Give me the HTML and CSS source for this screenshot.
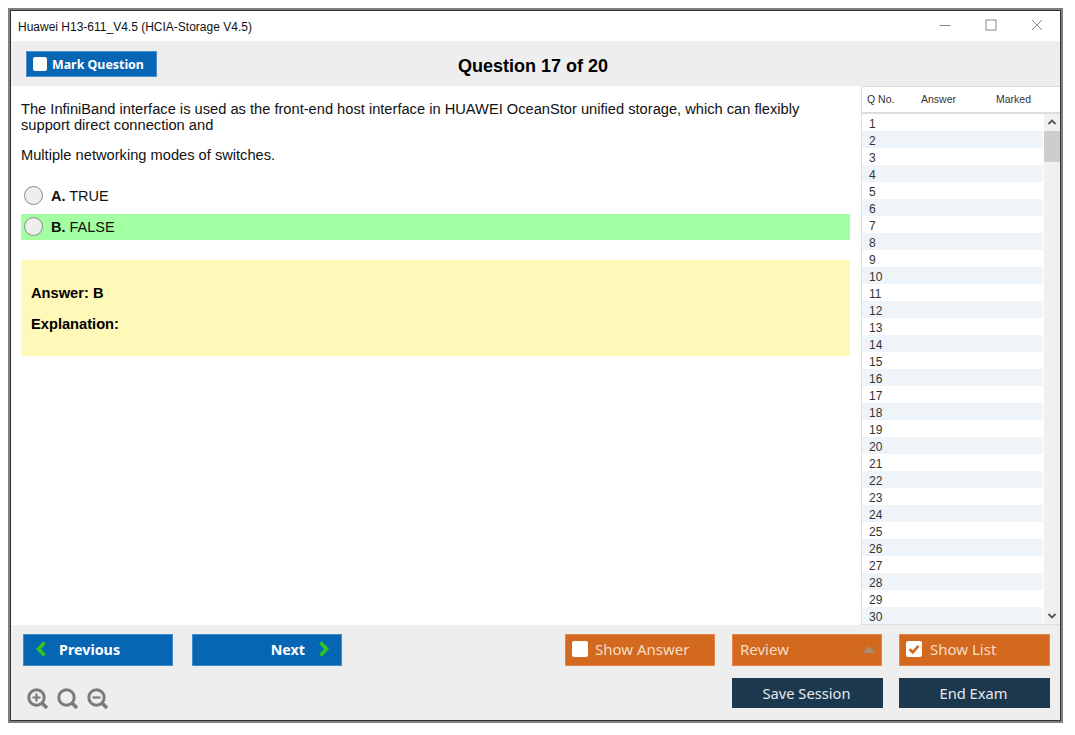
FILE: index.html
```html
<!DOCTYPE html>
<html lang="en">
<head>
<meta charset="utf-8">
<title>Huawei H13-611_V4.5</title>
<link rel="stylesheet" href="styles.css">
</head>
<body>
<div class="window">
  <header class="titlebar">
    <span class="title">Huawei H13-611_V4.5 (HCIA-Storage V4.5)</span>
    <div class="controls">
      <svg width="12" height="12" viewBox="0 0 12 12"><path d="M0.5 6.5H11.5" stroke="#8a8a8a" fill="none"/></svg>
      <svg width="12" height="12" viewBox="0 0 12 12"><rect x="1" y="1" width="10" height="10" stroke="#8a8a8a" fill="none"/></svg>
      <svg width="12" height="12" viewBox="0 0 12 12"><path d="M1 1L11 11M11 1L1 11" stroke="#8a8a8a" fill="none"/></svg>
    </div>
  </header>
  <div class="toolbar">
    <button class="btn btn-mark"><span class="box"></span>Mark Question</button>
    <h1 class="qtitle">Question 17 of 20</h1>
  </div>
  <main class="main">
    <section class="content">
      <p class="q">The InfiniBand interface is used as the front-end host interface in HUAWEI OceanStor unified storage, which can flexibly support direct connection and</p>
      <p class="q q2">Multiple networking modes of switches.</p>
      <div class="option"><span class="radio"></span><span><b>A.</b> TRUE</span></div>
      <div class="option correct"><span class="radio"></span><span><b>B.</b> FALSE</span></div>
      <div class="answer">
        <p>Answer: B</p>
        <p>Explanation:</p>
      </div>
    </section>
    <aside class="list">
      <div class="list-head"><span class="c1">Q No.</span><span class="c2">Answer</span><span class="c3">Marked</span></div>
      <div class="list-body">
        <div class="rows" id="rows">
          <div class="row">1</div><div class="row">2</div><div class="row">3</div><div class="row">4</div><div class="row">5</div>
          <div class="row">6</div><div class="row">7</div><div class="row">8</div><div class="row">9</div><div class="row">10</div>
          <div class="row">11</div><div class="row">12</div><div class="row">13</div><div class="row">14</div><div class="row">15</div>
          <div class="row">16</div><div class="row">17</div><div class="row">18</div><div class="row">19</div><div class="row">20</div>
          <div class="row">21</div><div class="row">22</div><div class="row">23</div><div class="row">24</div><div class="row">25</div>
          <div class="row">26</div><div class="row">27</div><div class="row">28</div><div class="row">29</div><div class="row">30</div>
        </div>
        <div class="scrollbar">
          <svg class="arrow" width="16" height="17" viewBox="0 0 16 17"><path d="M4.5 10L8 6.5L11.5 10" stroke="#555" stroke-width="1.8" fill="none"/></svg>
          <div class="thumb"></div>
          <div class="track"></div>
          <svg class="arrow" width="16" height="17" viewBox="0 0 16 17"><path d="M4.5 7L8 10.5L11.5 7" stroke="#555" stroke-width="1.8" fill="none"/></svg>
        </div>
      </div>
    </aside>
  </main>
  <footer class="footer">
    <div class="foot-row foot-top">
      <button class="btn btn-blue btn-prev">
        <svg width="12" height="16" viewBox="0 0 12 16"><path d="M9.5 1.5L3.5 8L9.5 14.5" stroke="#2fc61f" stroke-width="3.6" fill="none"/></svg>
        Previous
      </button>
      <button class="btn btn-blue btn-next">
        Next
        <svg width="12" height="16" viewBox="0 0 12 16"><path d="M2.5 1.5L8.5 8L2.5 14.5" stroke="#2fc61f" stroke-width="3.6" fill="none"/></svg>
      </button>
      <button class="btn btn-orange btn-answer"><span class="box box-lg"></span>Show Answer</button>
      <button class="btn btn-orange btn-review">Review<svg width="14" height="7" viewBox="0 0 14 7"><path d="M0 7L7 0L14 7Z" fill="#a98a70"/></svg></button>
      <button class="btn btn-orange btn-show"><span class="box box-lg"><svg width="14" height="14" viewBox="0 0 14 14"><path d="M2.5 7.2L5.8 10.3L11.5 3.8" stroke="#d2691e" stroke-width="2.6" fill="none"/></svg></span>Show List</button>
    </div>
    <div class="foot-row foot-bottom">
      <div class="zooms">
        <svg width="21" height="21" viewBox="0 0 21 21"><circle cx="9.5" cy="9.5" r="7.7" stroke="#7b7b7b" stroke-width="3" fill="none"/><path d="M15 15L20 20" stroke="#7b7b7b" stroke-width="3.6" fill="none"/><path d="M5.5 9.5H13.5M9.5 5.5V13.5" stroke="#7b7b7b" stroke-width="2.2" fill="none"/></svg>
        <svg width="21" height="21" viewBox="0 0 21 21"><circle cx="9.5" cy="9.5" r="7.7" stroke="#7b7b7b" stroke-width="3" fill="none"/><path d="M15 15L20 20" stroke="#7b7b7b" stroke-width="3.6" fill="none"/></svg>
        <svg width="21" height="21" viewBox="0 0 21 21"><circle cx="9.5" cy="9.5" r="7.7" stroke="#7b7b7b" stroke-width="3" fill="none"/><path d="M15 15L20 20" stroke="#7b7b7b" stroke-width="3.6" fill="none"/><path d="M5.5 9.5H13.5" stroke="#7b7b7b" stroke-width="2.2" fill="none"/></svg>
      </div>
      <button class="btn btn-navy btn-save">Save Session</button>
      <button class="btn btn-navy btn-end">End Exam</button>
    </div>
  </footer>
</div>
</body>
</html>
```
FILE: styles.css
```css
* { box-sizing: border-box; }
html, body { margin: 0; padding: 0; background: #fff; }
body { padding: 8px 0 0 8px; font-family: "Liberation Sans", Arial, sans-serif; color: #111; }
.window {
  width: 1055px; height: 715px;
  border: 2px solid #808080;
  outline: 1px solid #333;
  outline-offset: -3px;
  padding: 1px;
  display: flex; flex-direction: column;
  background: #fff;
}
.titlebar { height: 30px; flex: none; display: flex; align-items: center; justify-content: space-between; padding: 1px 17px 0 7px; }
.title { font-size: 12px; color: #111; }
.controls { display: flex; gap: 34px; margin-top: -3px; }
.toolbar { height: 45px; flex: none; background: #eee; display: flex; align-items: center; padding: 0 0 0 15px; position: relative; }
.qtitle { font-size: 18px; font-weight: bold; margin: 0; color: #000; position: absolute; left: 447px; top: 14px; line-height: 22px; }
.btn {
  font-family: "Noto Sans", "Open Sans", sans-serif;
  border: 0; padding: 0; margin: 0; color: #fff;
  display: flex; align-items: center;
  font-size: 14px;
}
.btn-mark { width: 131px; height: 26px; margin-top: 1px; background: #0766b3; border: 1px solid #4a8fc9; padding-left: 6px; font-weight: 700; font-size: 12.4px; gap: 5px; }
.box { width: 14px; height: 14px; background: #fff; border-radius: 2px; display: inline-block; flex: none; }
.box-lg { width: 16px; height: 16px; display: flex; align-items: center; justify-content: center; }
.main { flex: 1; min-height: 0; display: flex; }
.content { width: 850px; flex: none; padding: 15px 0 0 10px; }
.q { margin: 0; width: 800px; font-size: 14.67px; line-height: 16px; color: #111; }
.q2 { margin-top: 14px; margin-bottom: 20px; }
.option { width: 829px; height: 26px; display: flex; align-items: center; gap: 8px; padding-left: 3px; font-size: 14.5px; margin-bottom: 5px; }
.correct { background: #a2ffa2; }
.radio { width: 19px; height: 19px; margin-top: -1px; border-radius: 50%; background: #eee; border: 1px solid #8a8a8a; flex: none; }
.answer { width: 829px; height: 96px; margin-top: 20px; background: #fef8b9; padding: 25px 10px 0; font-size: 14.67px; font-weight: bold; color: #000; }
.answer p { margin: 0 0 15px; line-height: 16px; }
.list { flex: 1; min-width: 0; border-left: 1px solid #ddd; display: flex; flex-direction: column; }
.list-head { height: 28px; flex: none; border-top: 1px solid #ddd; border-bottom: 2px solid #ddd; display: flex; align-items: center; font-family: "Liberation Sans", sans-serif; font-size: 10.5px; color: #333; padding-bottom: 1px; }
.c1 { width: 59px; padding-left: 5px; }
.c2 { width: 75px; }
.c3 { width: 60px; }
.list-body { flex: 1; min-height: 0; display: flex; border-bottom: 1px solid #ddd; overflow: hidden; }
.rows { width: 181px; flex: none; }
.row { height: 17px; line-height: 20px; padding-left: 7px; font-size: 12px; color: #333; }
.row:nth-child(even) { background: #eff4f9; }
.scrollbar { flex: 1; background: #f0f0f0; display: flex; flex-direction: column; margin-left: 1px; }
.arrow { flex: none; display: block; }
.thumb { height: 31px; flex: none; background: #cdcdcd; }
.track { flex: 1; }
.footer { height: 95px; flex: none; background: #eee; padding: 9px 10px 0 12px; }
.foot-row { display: flex; }
.foot-top { height: 32px; }
.foot-bottom { margin-top: 12px; align-items: flex-start; }
.btn-blue { width: 150px; height: 32px; background: #0766b3; border: 1px solid #3f8ccb; font-weight: 700; font-size: 14.3px; padding-bottom: 2px; }
.btn-prev { padding-left: 11px; gap: 12px; }
.btn-next { margin-left: 19px; justify-content: flex-end; padding-right: 11px; gap: 13px; }
.btn-orange { width: 150px; height: 32px; background: #d2691e; border: 1px solid #e2854a; font-size: 15px; color: #f5dcc8; padding: 0 0 2px 6px; gap: 7px; }
.btn-answer { margin-left: 223px; }
.btn-review { margin-left: 17px; justify-content: space-between; padding-right: 5px; padding-left: 7px; }
.btn-show { margin-left: 17px; width: 151px; gap: 8px; }
.zooms { display: flex; gap: 9px; margin: 10px 0 0 4px; width: 705px; flex: none; }
.btn-navy { width: 151px; height: 30px; background: #1c384f; justify-content: center; font-size: 14.7px; color: #e4e9ee; padding-right: 2px; }
.btn-end { margin-left: 16px; }
```
